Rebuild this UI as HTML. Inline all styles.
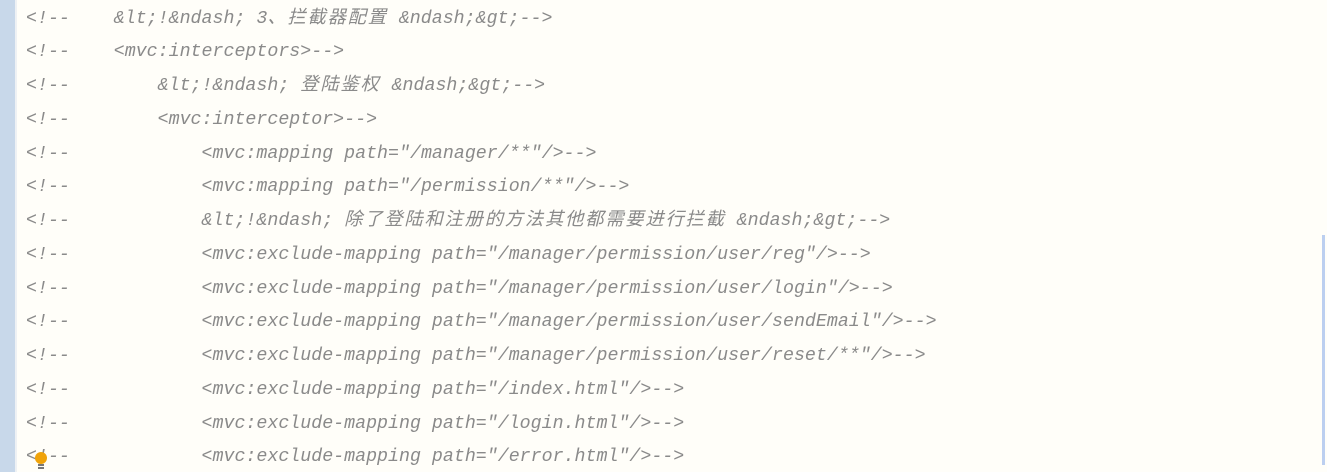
<!DOCTYPE html>
<html><head><meta charset="utf-8"><style>
html,body{margin:0;padding:0;width:1327px;height:472px;overflow:hidden;background:#fffef9;}
.g{position:absolute;left:0;top:0;width:15px;height:472px;background:#c8d8ea;}
.g2{position:absolute;left:15px;top:0;width:2px;height:472px;background:#eef1f4;}
.sb{position:absolute;left:1322px;top:235px;width:3px;height:230px;background:#bccff0;}
.l{position:absolute;left:26px;white-space:pre;font-family:"Liberation Mono","Noto Sans CJK SC",monospace;font-style:italic;font-size:18.3px;color:#8a8a8a;line-height:24px;}
.c{letter-spacing:1.8px;}
.bulb{position:absolute;left:35px;top:452px;width:12px;height:12px;border-radius:50%;background:#f0a30a;}
.bb{position:absolute;left:38px;top:464px;width:6px;height:2px;background:#777;box-shadow:0 3px 0 #777;}
</style></head><body>
<div class="g"></div><div class="g2"></div><div class="sb"></div>
<div class="l" style="top:7px">&lt;!--    &amp;lt;!&amp;ndash; 3<span class="c">、拦截器配置</span> &amp;ndash;&amp;gt;--&gt;</div>
<div class="l" style="top:40px">&lt;!--    &lt;mvc:interceptors&gt;--&gt;</div>
<div class="l" style="top:74px">&lt;!--        &amp;lt;!&amp;ndash; <span class="c">登陆鉴权</span> &amp;ndash;&amp;gt;--&gt;</div>
<div class="l" style="top:108px">&lt;!--        &lt;mvc:interceptor&gt;--&gt;</div>
<div class="l" style="top:142px">&lt;!--            &lt;mvc:mapping path="/manager/**"/&gt;--&gt;</div>
<div class="l" style="top:175px">&lt;!--            &lt;mvc:mapping path="/permission/**"/&gt;--&gt;</div>
<div class="l" style="top:209px">&lt;!--            &amp;lt;!&amp;ndash; <span class="c">除了登陆和注册的方法其他都需要进行拦截</span> &amp;ndash;&amp;gt;--&gt;</div>
<div class="l" style="top:243px">&lt;!--            &lt;mvc:exclude-mapping path="/manager/permission/user/reg"/&gt;--&gt;</div>
<div class="l" style="top:277px">&lt;!--            &lt;mvc:exclude-mapping path="/manager/permission/user/login"/&gt;--&gt;</div>
<div class="l" style="top:310px">&lt;!--            &lt;mvc:exclude-mapping path="/manager/permission/user/sendEmail"/&gt;--&gt;</div>
<div class="l" style="top:344px">&lt;!--            &lt;mvc:exclude-mapping path="/manager/permission/user/reset/**"/&gt;--&gt;</div>
<div class="l" style="top:378px">&lt;!--            &lt;mvc:exclude-mapping path="/index.html"/&gt;--&gt;</div>
<div class="l" style="top:412px">&lt;!--            &lt;mvc:exclude-mapping path="/login.html"/&gt;--&gt;</div>
<div class="l" style="top:445px">&lt;!--            &lt;mvc:exclude-mapping path="/error.html"/&gt;--&gt;</div>
<div class="bulb"></div><div class="bb"></div>
</body></html>
